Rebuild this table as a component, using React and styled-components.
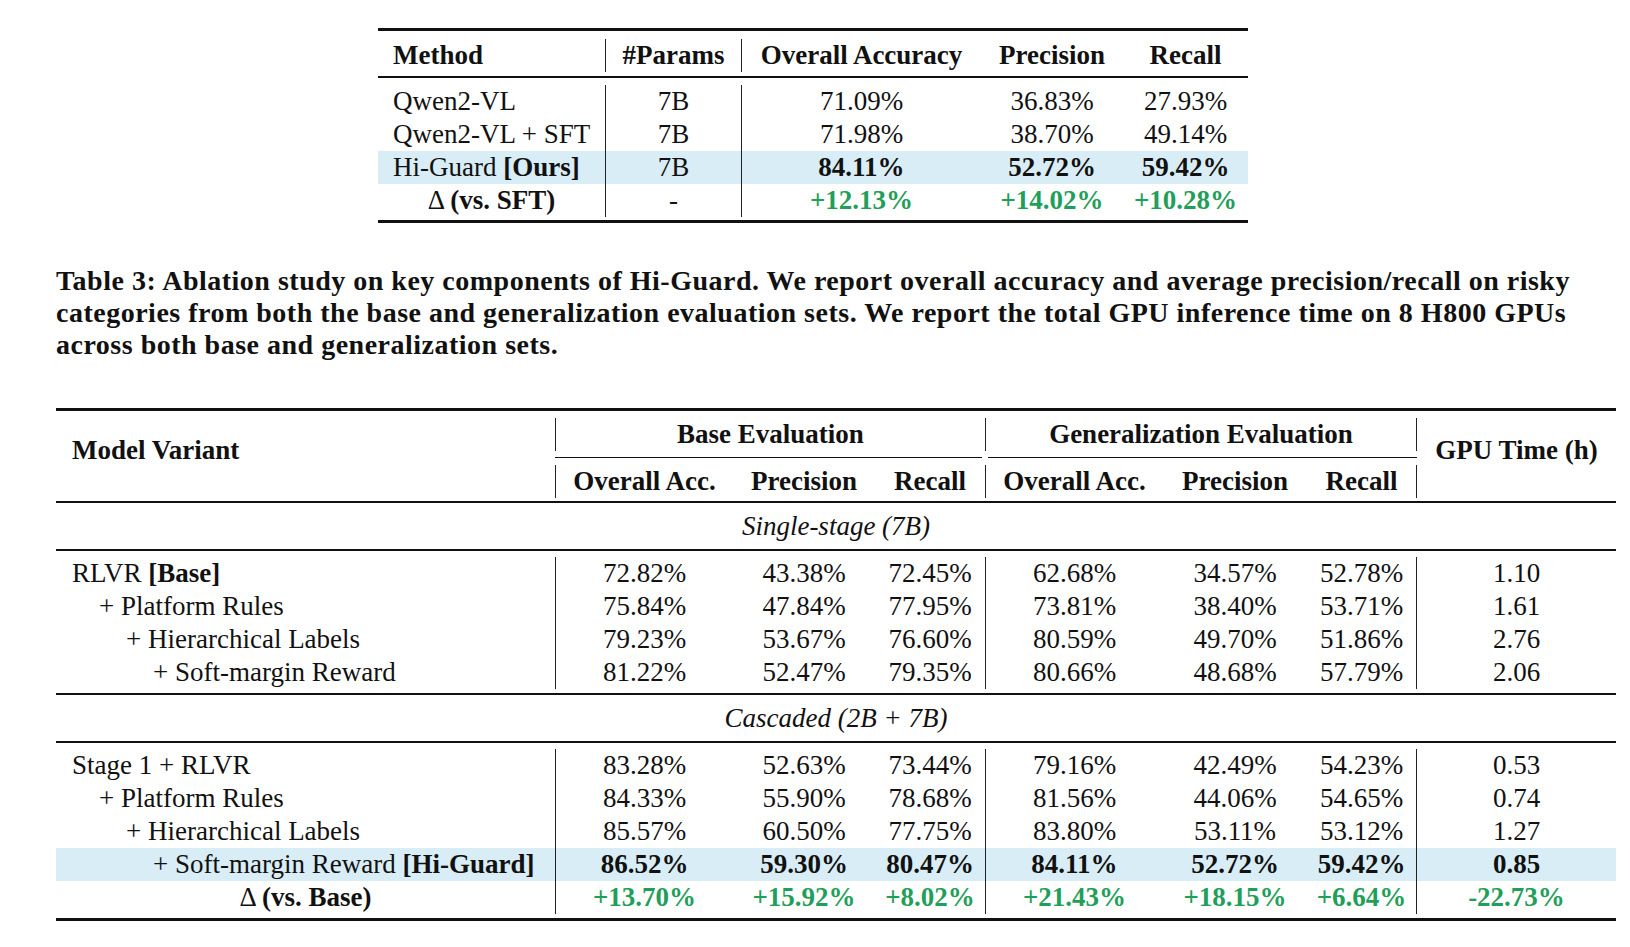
import React from 'react';
import styled, { createGlobalStyle } from 'styled-components';

const GlobalStyle = createGlobalStyle`
  html, body {
    margin: 0;
    padding: 0;
    background: #fff;
  }
  body {
    font-family: "Liberation Serif", "Times New Roman", serif;
    color: #111;
  }
`;

const GREEN = '#1f9f5a';
const HIGHLIGHT = '#d8edf5';
const VLINE = '1px solid #222';

const Page = styled.div`
  width: 1630px;
  min-height: 947px;
  box-sizing: border-box;
  padding: 28px 0 0 56px;
`;

const Table = styled.table`
  border-collapse: separate;
  border-spacing: 0;
  table-layout: fixed;
  width: ${({ $w }) => $w}px;
  margin-left: ${({ $offset }) => $offset || 0}px;
  margin-top: ${({ $top }) => $top || 0}px;
  font-size: 27px;
  line-height: 33px;
`;

const RuleRow = styled.tr`
  td {
    padding: 0;
    height: ${({ $h }) => $h}px;
    background: #111;
    font-size: 0;
    line-height: 0;
  }
`;

const GapRow = styled.tr`
  td {
    padding: 0;
    height: ${({ $h }) => $h}px;
    font-size: 0;
    line-height: 0;
  }
`;

const CmidRow = styled.tr`
  td {
    padding: 0;
    height: 1px;
    font-size: 0;
    line-height: 0;
  }
`;

const CmidLine = styled.div`
  height: 1px;
  background: #111;
  margin: ${({ $trim }) => ($trim === 'left' ? '0 0 0 3px' : '0 3px 0 0')};
`;

const Row = styled.tr`
  background: ${({ $hl }) => ($hl ? HIGHLIGHT : 'transparent')};
  td {
    height: ${({ $h }) => $h || 33}px;
  }
`;

const Cell = styled.td`
  padding: 0;
  padding-left: ${({ $pad }) => $pad || 0}px;
  text-align: ${({ $align }) => $align || 'center'};
  font-weight: ${({ $bold }) => ($bold ? 700 : 400)};
  font-style: ${({ $italic }) => ($italic ? 'italic' : 'normal')};
  color: ${({ $green }) => ($green ? GREEN : 'inherit')};
  border-left: ${({ $lineL }) => ($lineL ? VLINE : 'none')};
  border-right: ${({ $lineR }) => ($lineR ? VLINE : 'none')};
  white-space: nowrap;
  vertical-align: middle;
`;

const HeadCell = styled(Cell)`
  font-weight: 700;
  padding-bottom: ${({ $lift }) => $lift || 0}px;
`;

const Normal = styled.span`
  font-weight: 400;
`;

const Strong = styled.span`
  font-weight: 700;
`;

const Caption = styled.p`
  margin: 42px 0 0 0;
  font-weight: 700;
  font-size: 28px;
  letter-spacing: 0.5px;
  line-height: 32px;
  white-space: nowrap;

  span {
    display: block;
  }
`;

const Rule = ({ h, span }) => (
  <RuleRow $h={h}>
    <td colSpan={span} />
  </RuleRow>
);

const Gap = ({ h, span }) => (
  <GapRow $h={h}>
    <td colSpan={span} />
  </GapRow>
);

const Cols = ({ widths }) => (
  <colgroup>
    {widths.map((w, i) => (
      <col key={i} style={{ width: w }} />
    ))}
  </colgroup>
);

// ---- top table ----

const topRows = [
  { label: 'Qwen2-VL', params: '7B', vals: ['71.09%', '36.83%', '27.93%'] },
  { label: 'Qwen2-VL + SFT', params: '7B', vals: ['71.98%', '38.70%', '49.14%'] },
  {
    label: (
      <>
        Hi-Guard <Strong>[Ours]</Strong>
      </>
    ),
    params: '7B',
    vals: ['84.11%', '52.72%', '59.42%'],
    hl: true,
  },
];

const CompareTable = () => (
  <Table $w={870} $offset={322}>
    <Cols widths={[227, 136, 240, 142, 125]} />
    <tbody>
      <Rule h={3} span={5} />
      <Gap h={8} span={5} />
      <Row $h={32}>
        <HeadCell $align="left" $pad={15}>Method</HeadCell>
        <HeadCell $lineL>#Params</HeadCell>
        <HeadCell $lineL>Overall Accuracy</HeadCell>
        <HeadCell>Precision</HeadCell>
        <HeadCell>Recall</HeadCell>
      </Row>
      <Gap h={4} span={5} />
      <Rule h={2} span={5} />
      <Gap h={7} span={5} />
      {topRows.map((r, i) => (
        <Row key={i} $hl={r.hl}>
          <Cell $align="left" $pad={15}>{r.label}</Cell>
          <Cell $lineL>{r.params}</Cell>
          {r.vals.map((v, j) => (
            <Cell key={j} $lineL={j === 0} $bold={r.hl}>
              {v}
            </Cell>
          ))}
        </Row>
      ))}
      <Row>
        <Cell>
          <Normal>Δ </Normal>
          <Strong>(vs. SFT)</Strong>
        </Cell>
        <Cell $lineL>-</Cell>
        <Cell $lineL $bold $green>+12.13%</Cell>
        <Cell $bold $green>+14.02%</Cell>
        <Cell $bold $green>+10.28%</Cell>
      </Row>
      <Gap h={3} span={5} />
      <Rule h={3} span={5} />
    </tbody>
  </Table>
);

// ---- ablation table ----

const singleStage = [
  {
    label: (
      <>
        RLVR <Strong>[Base]</Strong>
      </>
    ),
    indent: 0,
    base: ['72.82%', '43.38%', '72.45%'],
    gen: ['62.68%', '34.57%', '52.78%'],
    gpu: '1.10',
  },
  {
    label: '+ Platform Rules',
    indent: 1,
    base: ['75.84%', '47.84%', '77.95%'],
    gen: ['73.81%', '38.40%', '53.71%'],
    gpu: '1.61',
  },
  {
    label: '+ Hierarchical Labels',
    indent: 2,
    base: ['79.23%', '53.67%', '76.60%'],
    gen: ['80.59%', '49.70%', '51.86%'],
    gpu: '2.76',
  },
  {
    label: '+ Soft-margin Reward',
    indent: 3,
    base: ['81.22%', '52.47%', '79.35%'],
    gen: ['80.66%', '48.68%', '57.79%'],
    gpu: '2.06',
  },
];

const cascaded = [
  {
    label: 'Stage 1 + RLVR',
    indent: 0,
    base: ['83.28%', '52.63%', '73.44%'],
    gen: ['79.16%', '42.49%', '54.23%'],
    gpu: '0.53',
  },
  {
    label: '+ Platform Rules',
    indent: 1,
    base: ['84.33%', '55.90%', '78.68%'],
    gen: ['81.56%', '44.06%', '54.65%'],
    gpu: '0.74',
  },
  {
    label: '+ Hierarchical Labels',
    indent: 2,
    base: ['85.57%', '60.50%', '77.75%'],
    gen: ['83.80%', '53.11%', '53.12%'],
    gpu: '1.27',
  },
  {
    label: (
      <>
        + Soft-margin Reward <Strong>[Hi-Guard]</Strong>
      </>
    ),
    indent: 3,
    base: ['86.52%', '59.30%', '80.47%'],
    gen: ['84.11%', '52.72%', '59.42%'],
    gpu: '0.85',
    hl: true,
  },
];

const DataRow = ({ r }) => (
  <Row $hl={r.hl}>
    <Cell $align="left" $pad={16 + r.indent * 27}>
      {r.label}
    </Cell>
    {r.base.map((v, j) => (
      <Cell key={'b' + j} $lineL={j === 0} $bold={r.hl}>
        {v}
      </Cell>
    ))}
    {r.gen.map((v, j) => (
      <Cell key={'g' + j} $lineL={j === 0} $lineR={j === 2} $bold={r.hl}>
        {v}
      </Cell>
    ))}
    <Cell $bold={r.hl}>{r.gpu}</Cell>
  </Row>
);

const SectionRow = ({ children }) => (
  <Row>
    <Cell colSpan={8} $italic>
      {children}
    </Cell>
  </Row>
);

const AblationTable = () => (
  <Table $w={1560} $top={47}>
    <Cols widths={[499, 178, 142, 110, 178, 144, 110, 199]} />
    <tbody>
      <Rule h={3} span={8} />
      <Gap h={7} span={8} />
      <Row $h={32}>
        <HeadCell rowSpan={5} $align="left" $pad={16} $lift={16}>
          Model Variant
        </HeadCell>
        <HeadCell colSpan={3} $lineL>Base Evaluation</HeadCell>
        <HeadCell colSpan={3} $lineL $lineR>Generalization Evaluation</HeadCell>
        <HeadCell rowSpan={5} $lift={16}>GPU Time (h)</HeadCell>
      </Row>
      <Gap h={6} span={6} />
      <CmidRow>
        <td colSpan={3}>
          <CmidLine $trim="right" />
        </td>
        <td colSpan={3}>
          <CmidLine $trim="left" />
        </td>
      </CmidRow>
      <Gap h={7} span={6} />
      <Row $h={32}>
        <HeadCell $lineL>Overall Acc.</HeadCell>
        <HeadCell>Precision</HeadCell>
        <HeadCell>Recall</HeadCell>
        <HeadCell $lineL>Overall Acc.</HeadCell>
        <HeadCell>Precision</HeadCell>
        <HeadCell $lineR>Recall</HeadCell>
      </Row>
      <Gap h={3} span={8} />
      <Rule h={2} span={8} />
      <Gap h={7} span={8} />
      <SectionRow>Single-stage (7B)</SectionRow>
      <Gap h={6} span={8} />
      <Rule h={2} span={8} />
      <Gap h={6} span={8} />
      {singleStage.map((r, i) => (
        <DataRow key={i} r={r} />
      ))}
      <Gap h={4} span={8} />
      <Rule h={2} span={8} />
      <Gap h={7} span={8} />
      <SectionRow>Cascaded (2B + 7B)</SectionRow>
      <Gap h={6} span={8} />
      <Rule h={2} span={8} />
      <Gap h={6} span={8} />
      {cascaded.map((r, i) => (
        <DataRow key={i} r={r} />
      ))}
      <Row>
        <Cell>
          <Normal>Δ </Normal>
          <Strong>(vs. Base)</Strong>
        </Cell>
        <Cell $lineL $bold $green>+13.70%</Cell>
        <Cell $bold $green>+15.92%</Cell>
        <Cell $bold $green>+8.02%</Cell>
        <Cell $lineL $bold $green>+21.43%</Cell>
        <Cell $bold $green>+18.15%</Cell>
        <Cell $lineR $bold $green>+6.64%</Cell>
        <Cell $bold $green>-22.73%</Cell>
      </Row>
      <Gap h={4} span={8} />
      <Rule h={3} span={8} />
    </tbody>
  </Table>
);

export default function App() {
  return (
    <>
      <GlobalStyle />
      <Page>
        <CompareTable />
        <Caption>
          <span>
            Table 3: Ablation study on key components of Hi-Guard. We report overall accuracy and
            average precision/recall on risky
          </span>
          <span>
            categories from both the base and generalization evaluation sets. We report the total
            GPU inference time on 8 H800 GPUs
          </span>
          <span>across both base and generalization sets.</span>
        </Caption>
        <AblationTable />
      </Page>
    </>
  );
}
